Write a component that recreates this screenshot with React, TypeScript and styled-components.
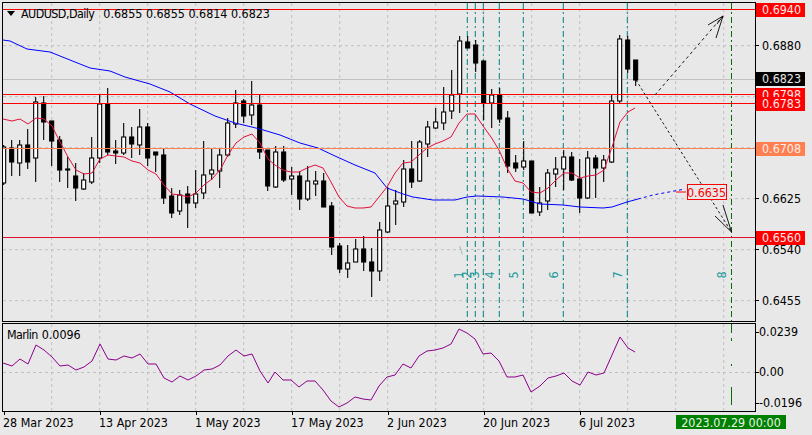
import React from "react";
import styled, { createGlobalStyle } from "styled-components";

const GlobalStyle = createGlobalStyle`
  html, body { margin: 0; padding: 0; background: #e8e8e8; }
  #root { width: 812px; height: 435px; overflow: hidden; }
`;

const FONT = `"DejaVu Sans", "Liberation Sans", sans-serif`;

const Terminal = styled.div`
  width: 812px;
  height: 435px;
  box-sizing: border-box;
  padding: 2px 0 0 2px;
  display: grid;
  grid-template-columns: 754px 56px;
  grid-template-rows: 320px 90px 23px;
  background: #e8e8e8;
  font-family: ${FONT};
  font-stretch: condensed;
  font-size: 12.4px;
  color: #000;
`;

const Pane = styled.div<{ $gapTop?: number }>`
  position: relative;
  box-sizing: border-box;
  border: 1px solid #000;
  margin-top: ${(p) => p.$gapTop ?? 0}px;
  overflow: hidden;
`;

const ChartSvg = styled.svg`
  display: block;
  width: 100%;
  height: 100%;
`;

const Legend = styled.div`
  position: absolute;
  left: 4px;
  top: 2px;
  display: flex;
  align-items: center;
  height: 16px;
  white-space: nowrap;
`;

const LegendArrow = styled.span`
  width: 0;
  height: 0;
  margin-right: 6px;
  border-left: 4.5px solid transparent;
  border-right: 4.5px solid transparent;
  border-top: 5px solid #000;
`;

const InstrumentName = styled.span`
  letter-spacing: -0.55px;
  margin-right: 9px;
`;

const IndicatorTitle = styled.div`
  position: absolute;
  left: 4px;
  top: 3px;
  display: flex;
  gap: 4px;
  white-space: nowrap;
`;

const IndicatorName = styled.span`
  letter-spacing: -0.6px;
`;

const Callout = styled.div`
  position: absolute;
  left: 683.5px;
  top: 181px;
  width: 40px;
  height: 16px;
  box-sizing: border-box;
  border: 1px solid #ff0000;
  background: #e8e8e8;
  color: #ff0000;
  display: flex;
  align-items: center;
  justify-content: center;
`;

const PriceAxis = styled.div`
  position: relative;
  display: grid;
  grid-auto-rows: 51px;
  align-content: start;
  padding-top: 18px;
`;

const IndicatorAxis = styled.div`
  display: grid;
  grid-template-rows: 14px 26px 14px 17px 14px;
  align-content: start;
  margin-top: 1px;
  padding-top: 2px;
`;

const Tick = styled.div<{ $row: number; $inset?: number }>`
  position: relative;
  grid-row-start: ${(p) => p.$row};
  align-self: center;
  height: 14px;
  line-height: 14px;
  padding-left: ${(p) => p.$inset ?? 6}px;
  white-space: nowrap;
  &::before {
    content: "";
    position: absolute;
    left: 0;
    top: 6.5px;
    width: 3px;
    height: 1px;
    background: #000;
  }
`;

const PriceTag = styled.div<{ $y: number; $bg?: string; $fg?: string }>`
  position: absolute;
  top: ${(p) => p.$y}px;
  left: 0;
  width: 49px;
  height: 14px;
  line-height: 14px;
  box-sizing: border-box;
  padding-left: 6px;
  white-space: nowrap;
  background: ${(p) => p.$bg ?? "#ff0000"};
  color: ${(p) => p.$fg ?? "#ffe8e8"};
`;

const DateAxis = styled.div`
  grid-column: 1 / 3;
  display: flex;
  align-items: flex-start;
  padding: 3px 0 0 1px;
`;

const DateTick = styled.div`
  position: relative;
  width: 96px;
  height: 14px;
  line-height: 15px;
  white-space: nowrap;
  &::before {
    content: "";
    position: absolute;
    left: 1px;
    top: -3px;
    width: 1px;
    height: 3px;
    background: #000;
  }
`;

const CursorDate = styled.div`
  width: 110px;
  height: 14px;
  margin-left: 1px;
  background: #008000;
  color: #e8f4e8;
  display: flex;
  align-items: center;
  justify-content: center;
`;

// [high, bodyTop, bodyBottom, low, white?]
type C = [number, number, number, number, number];
const candles: C[] = [
  [145,147,183,185,1],[140,148,162,176,0],[140,145,163,176,1],[129,145,162,169,0],[97,102,158,182,1],
  [96,103,122,140,0],[121,121,141,166,0],[136,140,170,182,0],[157,169,170,188,0],[163,176,188,201,0],
  [173,180,189,190,1],[137,158,182,184,1],[94,104,158,163,1],[88,104,152,155,0],[140,151,153,164,0],
  [123,137,153,155,1],[127,137,144,158,0],[109,127,145,155,1],[123,127,158,166,0],[152,152,155,172,0],
  [149,155,198,204,0],[188,196,213,218,0],[190,195,211,215,1],[186,194,203,228,0],[170,194,203,208,1],
  [141,175,193,199,1],[149,170,174,180,1],[149,155,171,188,1],[118,123,155,157,1],[90,103,124,128,1],
  [99,101,116,123,0],[81,105,115,125,1],[95,105,152,159,0],[150,150,186,191,0],[146,152,187,188,1],
  [146,152,180,182,0],[167,176,179,195,1],[171,176,199,210,0],[166,181,199,201,1],[171,181,184,196,1],
  [173,181,207,207,0],[202,206,247,255,0],[243,246,269,273,0],[245,263,269,278,1],[239,249,262,262,1],
  [236,249,262,271,0],[248,262,271,297,0],[222,230,271,281,1],[187,206,232,233,1],[190,201,204,225,1],
  [160,169,202,207,1],[141,169,182,188,0],[140,142,181,182,1],[121,127,144,157,1],[108,122,128,129,1],
  [87,112,123,130,1],[70,95,111,119,1],[36,41,94,113,1],[36,42,48,48,0],[40,45,63,72,0],
  [61,61,103,120,0],[89,95,103,128,1],[88,95,119,123,0],[111,118,166,173,0],[155,163,168,172,0],
  [141,161,167,170,1],[161,161,213,213,0],[187,203,212,216,1],[169,173,201,210,1],[157,169,174,187,1],
  [150,157,169,190,1],[152,157,180,181,0],[159,179,198,213,0],[151,158,198,199,1],[155,158,168,198,0],
  [155,160,168,182,1],[95,101,162,163,1],[35,39,101,103,1],[36,40,69,73,0],[60,60,80,86,0],
];

const toPts = (a: number[][]) => a.map((p) => p.join(",")).join(" ");

const blue = [[3,40],[10,41],[27,49],[50,52],[70,60],[90,68],[110,71],[125,77],[150,84],[170,92],[190,104],[215,116],[235,123],[260,129],[270,132],[280,135],[300,143],[318,148],[335,156],[355,165],[375,173],[387,188],[403,194],[413,197],[433,200],[455,200],[467,197],[477,196],[503,197],[523,199],[540,204],[563,205],[580,207],[603,208],[612,207],[627,202],[638,199]];
const blueDash = [[638,199],[653,195],[685,189]];
const redMa = [[3,119],[12,121],[20,119],[28,124],[36,118],[44,119],[52,126],[60,142],[68,157],[76,170],[84,174],[92,173],[100,159],[108,155],[116,156],[124,157],[132,161],[140,163],[148,170],[156,174],[164,185],[172,194],[180,195],[188,197],[196,193],[204,185],[212,179],[220,170],[228,155],[236,143],[244,137],[252,134],[260,143],[268,159],[275,165],[283,170],[291,172],[299,172],[307,168],[315,165],[323,168],[331,182],[339,197],[347,206],[355,208],[363,208],[371,207],[379,197],[387,187],[395,173],[403,163],[411,162],[419,155],[427,148],[435,144],[443,141],[451,137],[459,123],[467,114],[475,114],[483,126],[491,137],[499,150],[507,168],[515,181],[523,183],[531,192],[540,193],[548,188],[556,180],[564,173],[572,173],[580,178],[588,176],[596,175],[604,170],[612,147],[620,122],[628,112],[635,108]];
const marlin = [[3,363],[12,366],[20,359],[28,364],[36,345],[44,350],[52,357],[60,366],[68,365],[76,370],[84,367],[92,361],[100,344],[108,359],[116,360],[124,356],[132,358],[140,354],[148,364],[156,364],[164,378],[172,382],[180,376],[188,380],[196,376],[204,370],[212,369],[220,365],[228,356],[236,350],[244,356],[252,354],[260,371],[268,383],[275,372],[283,380],[291,380],[299,387],[307,381],[315,381],[323,390],[331,401],[339,407],[347,403],[355,397],[363,399],[371,400],[379,386],[387,377],[395,375],[403,364],[411,368],[419,356],[427,351],[435,350],[443,348],[451,344],[459,329],[467,333],[475,339],[483,354],[491,353],[499,361],[507,377],[515,377],[523,375],[531,392],[540,386],[548,378],[556,376],[564,373],[572,381],[580,385],[588,372],[596,375],[604,373],[612,355],[620,337],[628,348],[635,352]];

const gridX = Array.from({ length: 15 }, (_, i) => 51.7 + 48 * i);
const waveX = [467.3, 475.3, 483.3, 499.3, 523.3, 563.3, 627.3];
const waveLabels: [string, number][] = [["1",463],["2",471],["3",479],["4",494],["5",518],["6",558],["7",622],["8",726]];
const GRID = "#c0c0c0";

const Grid = ({ ys, y1, y2 }: { ys: number[]; y1: number; y2: number }) => (
  <g stroke={GRID} strokeWidth={1} strokeDasharray="3 3" fill="none">
    {gridX.map((x) => <line key={x} x1={x} x2={x} y1={y1} y2={y2} />)}
    {ys.map((y) => <line key={y} x1={3} x2={756} y1={y} y2={y} />)}
  </g>
);

const HLine = ({ y, c }: { y: number; c: string }) => (
  <line x1={3} x2={756} y1={y} y2={y} stroke={c} strokeWidth={1} />
);

export default function App() {
  return (
    <Terminal>
      <GlobalStyle />
      <Pane>
        <ChartSvg viewBox="3 3 752 318" preserveAspectRatio="none">
          <Grid ys={[45.7, 96.7, 147.7, 198.7, 249.7, 300.7]} y1={3} y2={321} />
          <HLine y={79.5} c="#c0c0c0" />
          {waveX.map((x) => (
            <line key={x} x1={x} x2={x} y1={3} y2={321} stroke="#008080" strokeWidth={1} strokeDasharray="6 3 2 3" />
          ))}
          <line x1={731.5} x2={731.5} y1={3} y2={321} stroke="#007000" strokeWidth={1} strokeDasharray="6 3 2 3" />
          {candles.map(([h, t, b, l, w], i) => {
            const cx = 3.67 + 8 * i;
            return (
              <g key={i}>
                <line x1={cx} x2={cx} y1={h} y2={l} stroke="#000" strokeWidth={1.1} />
                <rect x={cx - 2} y={t} width={4} height={Math.max(b - t, 1)} fill={w ? "#fff" : "#000"} stroke="#000" strokeWidth={1.1} />
              </g>
            );
          })}
          <polyline points={toPts(blue)} fill="none" stroke="#0000ff" strokeWidth={1} />
          <polyline points={toPts(blueDash)} fill="none" stroke="#0000ff" strokeWidth={1} strokeDasharray="3 3" />
          <polyline points={toPts(redMa)} fill="none" stroke="#e0103c" strokeWidth={1} />
          <HLine y={9.5} c="#ff0000" />
          <HLine y={94.5} c="#ff0000" />
          <HLine y={103.5} c="#ff0000" />
          <HLine y={148.5} c="#ff7f50" />
          <HLine y={237.5} c="#e0102c" />
          <line x1={676} x2={686} y1={192} y2={192} stroke="#ff0000" strokeWidth={1} />
          <g stroke="#000" strokeWidth={0.9} fill="none">
            <line x1={655} y1={95} x2={723} y2={16} strokeDasharray="3 3" />
            <path d="M708 25 L723 16 M716 38 L723 16 M717 24 L723 16" />
            <line x1={636} y1={80} x2={731.5} y2={232} strokeDasharray="2.5 2.5" />
            <path d="M715 216 L731.5 232 M723 205 L731.5 232" />
          </g>
          <line x1={459.5} y1={246} x2={462.5} y2={255} stroke="#80b0b0" strokeWidth={0.8} strokeDasharray="4 1" />
          <g fill="#1a9a9a" fontFamily={FONT} fontSize={12.5} style={{ fontStretch: "condensed" }}>
            {waveLabels.map(([t, x]) => (
              <text key={t} transform={`translate(${x} 278.5) rotate(-90)`}>{t}</text>
            ))}
          </g>
        </ChartSvg>
        <Legend>
          <LegendArrow />
          <InstrumentName>AUDUSD,Daily</InstrumentName>
          <span>0.6855 0.6855 0.6814 0.6823</span>
        </Legend>
        <Callout>0.6635</Callout>
      </Pane>
      <PriceAxis>
        <Tick $row={1}>0.6880</Tick>
        <Tick $row={4}>0.6625</Tick>
        <Tick $row={5}>0.6540</Tick>
        <Tick $row={6}>0.6455</Tick>
        <PriceTag $y={1}>0.6940</PriceTag>
        <PriceTag $y={70} $bg="#000" $fg="#e8e8e8">0.6823</PriceTag>
        <PriceTag $y={86}>0.6798</PriceTag>
        <PriceTag $y={95}>0.6783</PriceTag>
        <PriceTag $y={140} $bg="#ff7f50" $fg="#ffeee8">0.6708</PriceTag>
        <PriceTag $y={229}>0.6560</PriceTag>
      </PriceAxis>
      <Pane $gapTop={1}>
        <ChartSvg viewBox="3 324 752 87" preserveAspectRatio="none">
          <Grid ys={[372.5]} y1={324} y2={411} />
          <line x1={731.5} x2={731.5} y1={324} y2={405} stroke="#007000" strokeWidth={1} strokeDasharray="9 5 3 23 2 21 18" />
          <polyline points={toPts(marlin)} fill="none" stroke="#8b008b" strokeWidth={1} />
        </ChartSvg>
        <IndicatorTitle>
          <IndicatorName>Marlin</IndicatorName>
          <span>0.0096</span>
        </IndicatorTitle>
      </Pane>
      <IndicatorAxis>
        <Tick $row={1} $inset={3}>0.0239</Tick>
        <Tick $row={3} $inset={3}>0.00</Tick>
        <Tick $row={5} $inset={3}>-0.0196</Tick>
      </IndicatorAxis>
      <DateAxis>
        <DateTick>28 Mar 2023</DateTick>
        <DateTick>13 Apr 2023</DateTick>
        <DateTick>1 May 2023</DateTick>
        <DateTick>17 May 2023</DateTick>
        <DateTick>2 Jun 2023</DateTick>
        <DateTick>20 Jun 2023</DateTick>
        <DateTick>6 Jul 2023</DateTick>
        <CursorDate>2023.07.29 00:00</CursorDate>
      </DateAxis>
    </Terminal>
  );
}
